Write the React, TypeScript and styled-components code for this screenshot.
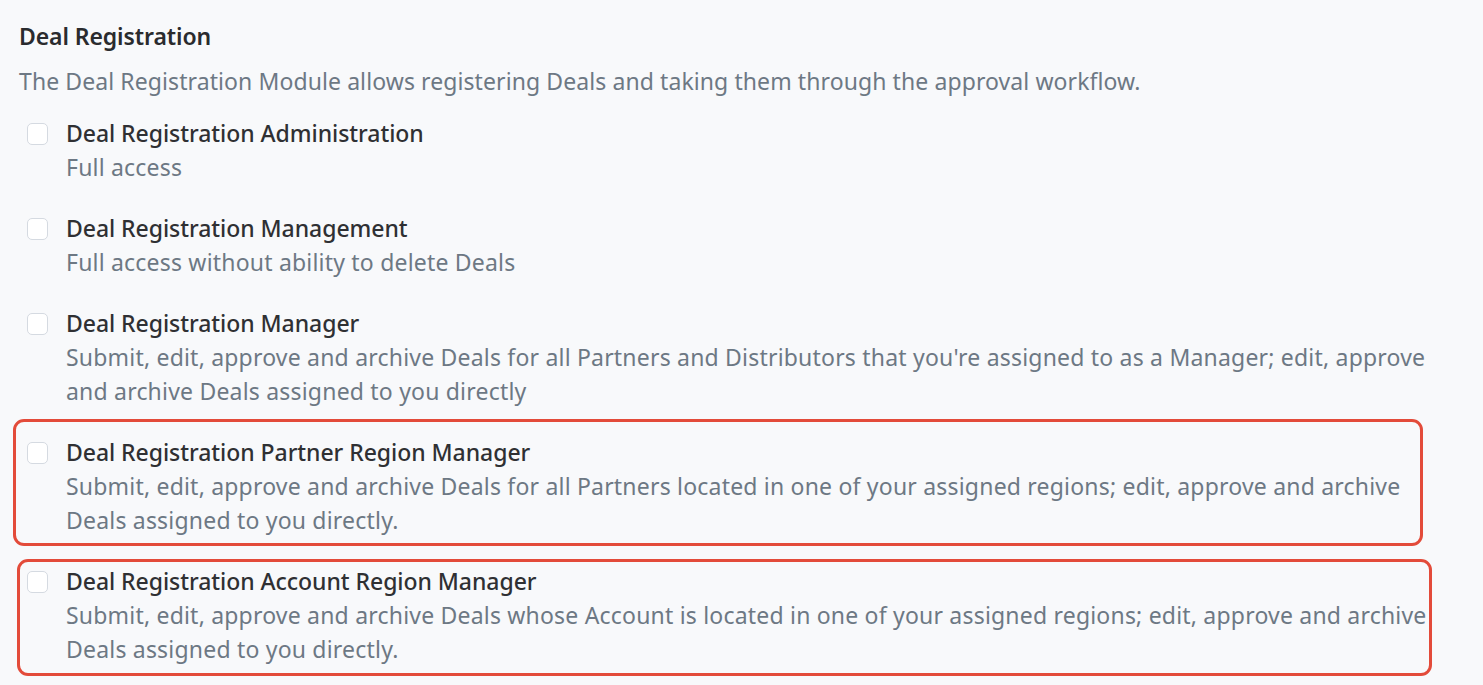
import React from "react";
import styled, { createGlobalStyle } from "styled-components";

const GlobalStyle = createGlobalStyle`
  html, body {
    margin: 0;
    padding: 0;
    background: #f8f9fb;
  }
  body {
    font-family: "Noto Sans", "Open Sans", sans-serif;
  }
`;

const Page = styled.main`
  box-sizing: border-box;
  width: 1483px;
  min-height: 685px;
  padding: 19px 40px 0 19px;
  background: #f8f9fb;
  display: flex;
  flex-direction: column;
`;

const Heading = styled.h2`
  margin: 0;
  font-size: 23px;
  line-height: 34px;
  font-weight: 600;
  color: #2a2b2e;
  letter-spacing: -0.1px;
`;

const Intro = styled.p`
  margin: 11px 0 18px;
  font-size: 23px;
  line-height: 34px;
  color: #6d7884;
  letter-spacing: 0.09px;
`;

const List = styled.div`
  display: flex;
  flex-direction: column;
  gap: 27px;
`;

const Item = styled.label`
  position: relative;
  display: flex;
  align-items: flex-start;
  gap: 18px;
  padding-left: 8px;
  cursor: pointer;
`;

const Box = styled.span`
  flex: none;
  box-sizing: border-box;
  width: 21px;
  height: 22px;
  margin-top: 7px;
  background: #ffffff;
  border: 1.5px solid #d5dae1;
  border-radius: 5px;
`;

const Text = styled.div`
  display: flex;
  flex-direction: column;
  font-size: 23px;
  line-height: 34px;
`;

const Title = styled.span`
  color: #2f3033;
  font-weight: 500;
  letter-spacing: -0.05px;
`;

const Desc = styled.span`
  color: #6d7884;
  letter-spacing: 0.2px;
`;

const Highlight = styled.span<{ $t: number; $r: number; $b: number; $l: number }>`
  position: absolute;
  top: ${(p) => p.$t}px;
  right: ${(p) => p.$r}px;
  bottom: ${(p) => p.$b}px;
  left: ${(p) => p.$l}px;
  border: 3.5px solid #e34b3a;
  border-radius: 11px;
  pointer-events: none;
`;

type Perm = {
  title: string;
  desc: string;
  hl?: { t: number; r: number; b: number; l: number };
};

const perms: Perm[] = [
  { title: "Deal Registration Administration", desc: "Full access" },
  { title: "Deal Registration Management", desc: "Full access without ability to delete Deals" },
  {
    title: "Deal Registration Manager",
    desc:
      "Submit, edit, approve and archive Deals for all Partners and Distributors that you're assigned to as a Manager; edit, approve and archive Deals assigned to you directly",
  },
  {
    title: "Deal Registration Partner Region Manager",
    desc:
      "Submit, edit, approve and archive Deals for all Partners located in one of your assigned regions; edit, approve and archive Deals assigned to you directly.",
    hl: { t: -16, r: 20, b: -9, l: -6 },
  },
  {
    title: "Deal Registration Account Region Manager",
    desc:
      "Submit, edit, approve and archive Deals whose Account is located in one of your assigned regions; edit, approve and archive Deals assigned to you directly.",
    hl: { t: -5, r: 11, b: -10, l: -2 },
  },
];

export default function App() {
  return (
    <Page>
      <GlobalStyle />
      <Heading>Deal Registration</Heading>
      <Intro>The Deal Registration Module allows registering Deals and taking them through the approval workflow.</Intro>
      <List>
        {perms.map((p) => (
          <Item key={p.title}>
            <Box />
            <Text>
              <Title>{p.title}</Title>
              <Desc>{p.desc}</Desc>
            </Text>
            {p.hl && <Highlight $t={p.hl.t} $r={p.hl.r} $b={p.hl.b} $l={p.hl.l} />}
          </Item>
        ))}
      </List>
    </Page>
  );
}
